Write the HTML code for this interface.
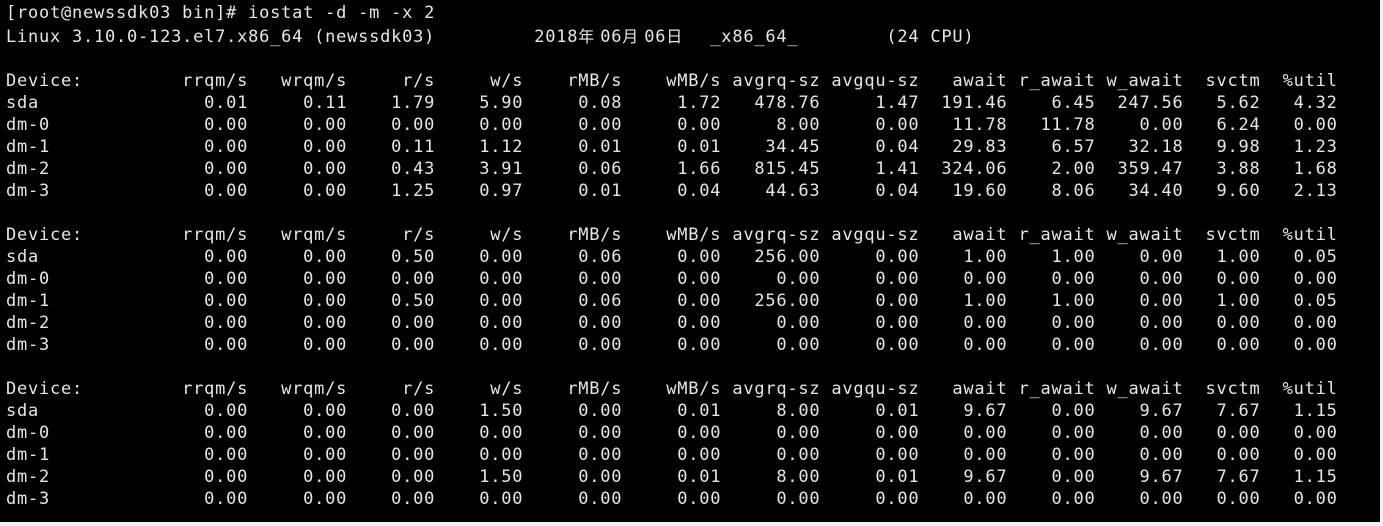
<!DOCTYPE html>
<html><head><meta charset="utf-8"><style>
html,body{margin:0;padding:0;background:#f0f0f0;}
#t{position:absolute;left:0;top:0;width:1380px;height:522px;background:#000;overflow:hidden;}
pre{margin:0;position:absolute;left:6px;top:2px;color:#e6e6e6;font-family:"DejaVu Sans Mono","Liberation Mono",monospace;font-size:17px;letter-spacing:0.77px;line-height:22px;}
.c{display:inline-block;width:22px;letter-spacing:0;font-family:"Noto Sans CJK SC",sans-serif;font-size:16px;text-align:left;}
</style></head><body><div id="t"><pre>[root@newssdk03 bin]# iostat -d -m -x 2
Linux 3.10.0-123.el7.x86_64 (newssdk03)         2018<span class="c">年</span>06<span class="c">月</span>06<span class="c">日</span>  _x86_64_        (24 CPU)

Device:         rrqm/s   wrqm/s     r/s     w/s    rMB/s    wMB/s avgrq-sz avgqu-sz   await r_await w_await  svctm  %util
sda               0.01     0.11    1.79    5.90     0.08     1.72   478.76     1.47  191.46    6.45  247.56   5.62   4.32
dm-0              0.00     0.00    0.00    0.00     0.00     0.00     8.00     0.00   11.78   11.78    0.00   6.24   0.00
dm-1              0.00     0.00    0.11    1.12     0.01     0.01    34.45     0.04   29.83    6.57   32.18   9.98   1.23
dm-2              0.00     0.00    0.43    3.91     0.06     1.66   815.45     1.41  324.06    2.00  359.47   3.88   1.68
dm-3              0.00     0.00    1.25    0.97     0.01     0.04    44.63     0.04   19.60    8.06   34.40   9.60   2.13

Device:         rrqm/s   wrqm/s     r/s     w/s    rMB/s    wMB/s avgrq-sz avgqu-sz   await r_await w_await  svctm  %util
sda               0.00     0.00    0.50    0.00     0.06     0.00   256.00     0.00    1.00    1.00    0.00   1.00   0.05
dm-0              0.00     0.00    0.00    0.00     0.00     0.00     0.00     0.00    0.00    0.00    0.00   0.00   0.00
dm-1              0.00     0.00    0.50    0.00     0.06     0.00   256.00     0.00    1.00    1.00    0.00   1.00   0.05
dm-2              0.00     0.00    0.00    0.00     0.00     0.00     0.00     0.00    0.00    0.00    0.00   0.00   0.00
dm-3              0.00     0.00    0.00    0.00     0.00     0.00     0.00     0.00    0.00    0.00    0.00   0.00   0.00

Device:         rrqm/s   wrqm/s     r/s     w/s    rMB/s    wMB/s avgrq-sz avgqu-sz   await r_await w_await  svctm  %util
sda               0.00     0.00    0.00    1.50     0.00     0.01     8.00     0.01    9.67    0.00    9.67   7.67   1.15
dm-0              0.00     0.00    0.00    0.00     0.00     0.00     0.00     0.00    0.00    0.00    0.00   0.00   0.00
dm-1              0.00     0.00    0.00    0.00     0.00     0.00     0.00     0.00    0.00    0.00    0.00   0.00   0.00
dm-2              0.00     0.00    0.00    1.50     0.00     0.01     8.00     0.01    9.67    0.00    9.67   7.67   1.15
dm-3              0.00     0.00    0.00    0.00     0.00     0.00     0.00     0.00    0.00    0.00    0.00   0.00   0.00
</pre></div></body></html>
